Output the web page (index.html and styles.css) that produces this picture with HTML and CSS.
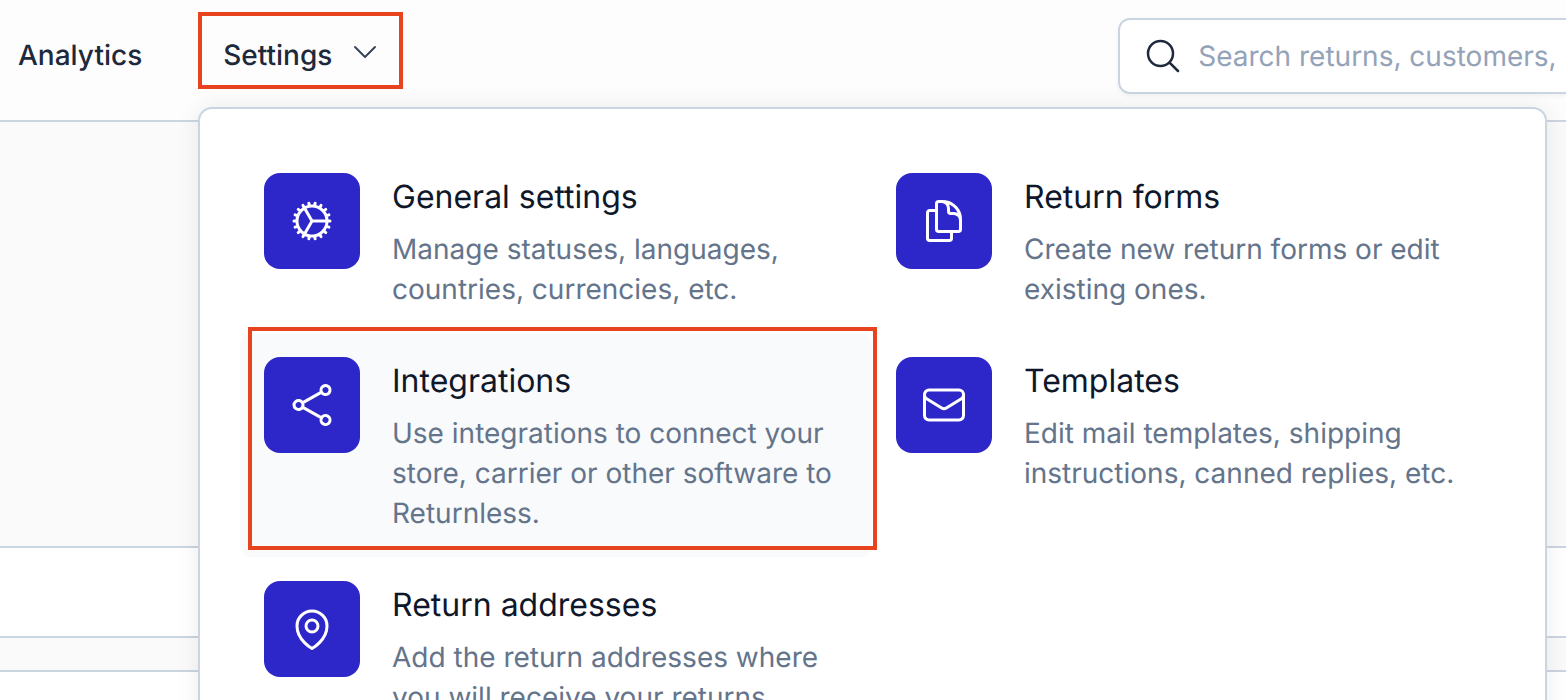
FILE: index.html
```html
<!DOCTYPE html>
<html lang="en">
<head>
<meta charset="utf-8">
<title>Settings menu</title>
<link rel="stylesheet" href="styles.css">
</head>
<body>
<div class="page">
  <header class="nav">
    <a class="nav-link analytics">Analytics</a>
    <a class="nav-link settings">Settings
      <svg class="chevron" viewBox="0 0 24 24"><path d="M19.5 8.25l-7.5 7.5-7.5-7.5"/></svg>
    </a>
    <div class="search">
      <svg class="search-icon" viewBox="0 0 24 24"><path d="M21 21l-5.197-5.197m0 0A7.5 7.5 0 105.196 5.196a7.5 7.5 0 0010.607 10.607z"/></svg>
      <span class="placeholder">Search returns, customers,</span>
    </div>
  </header>
  <main class="bands">
    <div class="band band-tall"></div>
    <div class="band band-white"></div>
    <div class="band band-thin"></div>
    <div class="band band-rest"></div>
  </main>

  <div class="menu">
    <a class="item">
      <span class="tile"><svg viewBox="0 0 24 24"><path d="M4.5 12a7.5 7.5 0 0015 0m-15 0a7.5 7.5 0 1115 0m-15 0H3m16.5 0H21m-1.5 0H12m-8.457 3.077l1.41-.513m14.095-5.13l1.41-.513M5.106 17.785l1.15-.964m11.49-9.642l1.149-.964M7.501 19.795l.75-1.3m7.5-12.99l.75-1.3m-6.063 16.658l.26-1.477m2.605-14.772l.26-1.477m0 17.726l-.26-1.477M10.698 4.614l-.26-1.477M16.5 19.794l-.75-1.299M7.5 4.205L12 12m6.894 5.785l-1.149-.964M6.256 7.178l-1.15-.964m15.352 8.864l-1.41-.513M4.954 9.435l-1.41-.514M12.002 12l-3.75 6.495"/></svg></span>
      <span class="copy"><span class="title">General settings</span><span class="desc">Manage statuses, languages, countries, currencies, etc.</span></span>
    </a>
    <a class="item">
      <span class="tile"><svg viewBox="0 0 24 24"><path d="M15.75 17.25v3.375c0 .621-.504 1.125-1.125 1.125h-9.75a1.125 1.125 0 01-1.125-1.125V7.875c0-.621.504-1.125 1.125-1.125H6.75a9.06 9.06 0 011.5.124m7.5 10.376h3.375c.621 0 1.125-.504 1.125-1.125V11.25c0-4.46-3.243-8.161-7.5-8.876a9.06 9.06 0 00-1.5-.124H9.375c-.621 0-1.125.504-1.125 1.125v3.5m7.5 10.375H9.375a1.125 1.125 0 01-1.125-1.125v-9.25m12 6.625v-1.875a3.375 3.375 0 00-3.375-3.375h-1.5a1.125 1.125 0 01-1.125-1.125v-1.5a3.375 3.375 0 00-3.375-3.375H9.75"/></svg></span>
      <span class="copy"><span class="title">Return forms</span><span class="desc">Create new return forms or edit existing ones.</span></span>
    </a>
    <a class="item item-active">
      <span class="tile"><svg viewBox="0 0 24 24"><path d="M7.217 10.907a2.25 2.25 0 100 2.186m0-2.186c.18.324.283.696.283 1.093s-.103.77-.283 1.093m0-2.186l9.566-5.314m-9.566 7.5l9.566 5.314m0 0a2.25 2.25 0 103.935 2.186 2.25 2.25 0 00-3.935-2.186zm0-12.814a2.25 2.25 0 103.933-2.185 2.25 2.25 0 00-3.933 2.185z"/></svg></span>
      <span class="copy"><span class="title">Integrations</span><span class="desc">Use integrations to connect your store, carrier or other software to Returnless.</span></span>
      <span class="annotation"></span>
    </a>
    <a class="item">
      <span class="tile"><svg viewBox="0 0 24 24"><path d="M21.75 6.75v10.5a2.25 2.25 0 01-2.25 2.25h-15a2.25 2.25 0 01-2.25-2.25V6.75m19.5 0A2.25 2.25 0 0019.5 4.5h-15a2.25 2.25 0 00-2.25 2.25m19.5 0v.243a2.25 2.25 0 01-1.07 1.916l-7.5 4.615a2.25 2.25 0 01-2.36 0L3.32 8.91a2.25 2.25 0 01-1.07-1.916V6.75"/></svg></span>
      <span class="copy"><span class="title">Templates</span><span class="desc">Edit mail templates, shipping instructions, canned replies, etc.</span></span>
    </a>
    <a class="item">
      <span class="tile"><svg viewBox="0 0 24 24"><path d="M15 10.5a3 3 0 11-6 0 3 3 0 016 0z"/><path d="M19.5 10.5c0 7.142-7.5 11.25-7.5 11.25S4.5 17.642 4.5 10.5a7.5 7.5 0 1115 0z"/></svg></span>
      <span class="copy"><span class="title">Return addresses</span><span class="desc">Add the return addresses where you will receive your returns.</span></span>
    </a>
  </div>
</div>
</body>
</html>
```
FILE: styles.css
```css
* { box-sizing: border-box; }
html, body { margin: 0; height: 100%; overflow: hidden; }
body { font-family: Inter, "Liberation Sans", sans-serif; background: #fff; color: #1e293b; text-rendering: geometricPrecision; }
.page { position: relative; height: 700px; overflow: hidden; }

.nav {
  height: 122px;
  display: flex;
  align-items: flex-start;
  background: #fdfdfd;
  border-bottom: 2px solid #cbd5e1;
}
.nav-link { flex: none; font-size: 28px; line-height: 40px; font-weight: 500; color: #1e293b; white-space: nowrap; }
.analytics { margin: 35px 0 0 18px; }
.settings {
  display: flex;
  align-items: center;
  width: 205px;
  height: 77px;
  margin: 12px 0 0 56px;
  padding: 8px 0 0 21px;
  border: 4px solid #e8431f;
}
.chevron { flex: none; width: 32px; height: 32px; margin: -6px 0 0 17px; fill: none; stroke: #334155; stroke-width: 1.4; stroke-linecap: round; stroke-linejoin: round; }

.search {
  display: flex;
  align-items: center;
  flex: none;
  width: 700px;
  height: 76px;
  margin: 18px 0 0 715px;
  padding-left: 23px;
  background: #fff;
  border: 2px solid #cbd5e1;
  border-radius: 12px;
  box-shadow: 0 2px 4px rgba(15, 23, 42, .05);
}
.search-icon { flex: none; width: 40px; height: 40px; fill: none; stroke: #1e293b; stroke-width: 1.5; stroke-linecap: round; stroke-linejoin: round; }
.placeholder { margin-left: 15px; font-size: 28px; line-height: 40px; color: #94a3b8; white-space: nowrap; }

.bands { display: flex; flex-direction: column; }
.band { border-bottom: 2px solid #cbd5e1; }
.band-tall { height: 426px; background: #fafafa; }
.band-white { height: 90px; background: #fff; }
.band-thin { height: 34px; background: #fafafa; }
.band-rest { height: 100px; background: #fff; border-bottom: 0; }

.menu {
  position: absolute;
  top: 107px;
  left: 198px;
  width: 1349px;
  height: 700px;
  display: grid;
  grid-template-columns: 632px 632px;
  align-content: start;
  padding: 40px;
  background: #fff;
  border: 2px solid #cbd5e1;
  border-radius: 14px;
  box-shadow: 0 0 24px rgba(15, 23, 42, .08);
}
.item { position: relative; display: flex; gap: 32px; padding: 24px; border-radius: 12px; }
.item-active { background: #f8fafc; }
.annotation {
  position: absolute;
  top: -6px;
  left: 8px;
  width: 629px;
  height: 223px;
  border: 4px solid #e8431f;
}
.tile {
  flex: none;
  display: flex;
  align-items: center;
  justify-content: center;
  width: 96px;
  height: 96px;
  background: #2d27c9;
  border-radius: 16px;
}
.tile svg { width: 48px; height: 48px; fill: none; stroke: #fff; stroke-width: 1.5; stroke-linecap: round; stroke-linejoin: round; }
.copy { display: flex; flex-direction: column; gap: 8px; }
.title { font-size: 32px; line-height: 48px; font-weight: 400; color: #0f172a; }
.desc { font-size: 28px; line-height: 40px; color: #64748b; }
```
